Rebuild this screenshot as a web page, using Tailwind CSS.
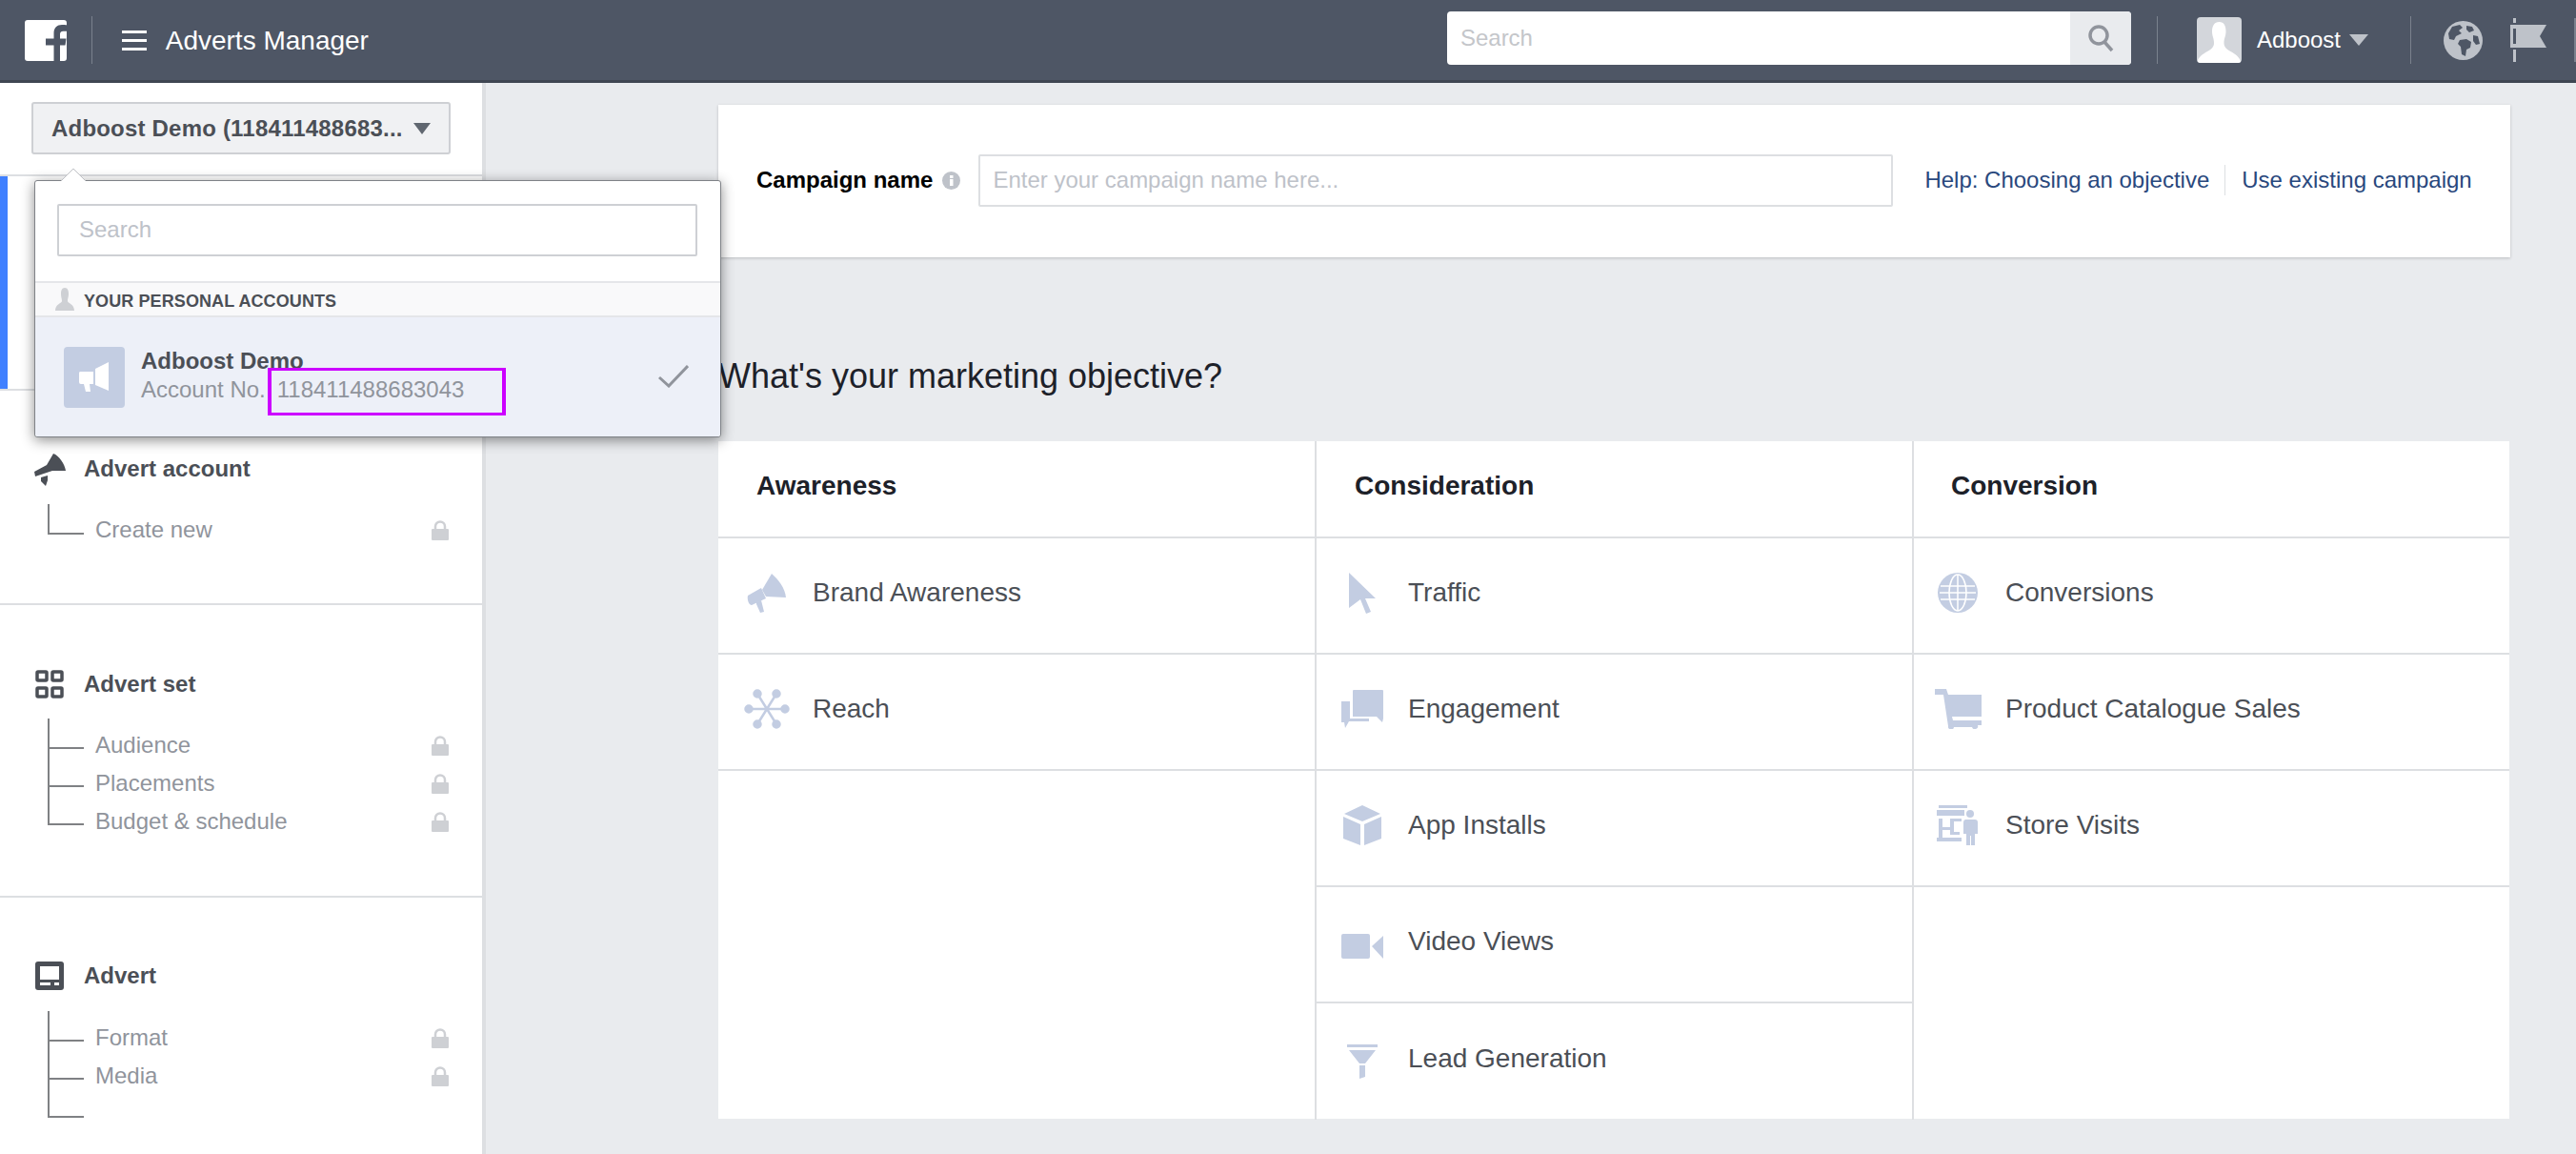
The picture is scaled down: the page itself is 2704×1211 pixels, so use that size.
<!DOCTYPE html>
<html lang="en">
<head>
    <meta charset="UTF-8">
    <title>Adverts Manager</title>
    <script src="https://cdn.jsdelivr.net/npm/@tailwindcss/browser@4"></script>
</head>
<body class="font-[family-name:Liberation_Sans,Arial,sans-serif] bg-[#e9ebee]">
<div class="relative w-[2704px] h-[1211px] overflow-hidden flex flex-col">

    <!-- top bar -->
    <header class="relative z-10 h-[87px] shrink-0 flex items-center bg-[#4e5665] border-b-[3px] border-[#3f4652] text-white">
        <div class="ml-[26px] w-[44px] h-[43px] shrink-0">
            <svg viewBox="0 0 44 43" class="w-[44px] h-[43px]"><path fill="#fff" d="M3 0h38a3 3 0 0 1 3 3v37a3 3 0 0 1-3 3H37V26.500h5.500l1-7H37v-4.500c0-2 .8-3.300 3.400-3.300H44V5.300c-1-.1-2.800-.3-5-.3-5 0-8.500 3-8.500 8.700v5.800H22v7h8.500V43H3a3 3 0 0 1-3-3V3a3 3 0 0 1 3-3z"/></svg>
        </div>
        <div class="ml-[26px] w-px h-[50px] bg-[#7a818d]"></div>
        <div class="ml-[31px] w-[26px] flex flex-col gap-[6px]">
            <div class="h-[3px] bg-white"></div>
            <div class="h-[3px] bg-white"></div>
            <div class="h-[3px] bg-white"></div>
        </div>
        <div class="ml-[20px] mt-[2px] text-[28px] leading-[34px] whitespace-nowrap shrink-0">Adverts Manager</div>

        <div class="ml-[1132px] mb-[4px] w-[718px] h-[56px] shrink-0 flex bg-white rounded-[4px] overflow-hidden">
            <div class="flex-1 pl-[14px] text-[24px] leading-[56px] text-[#c4c6ca]">Search</div>
            <div class="w-[64px] bg-[#e9ebee] flex items-center justify-center">
                <svg viewBox="0 0 28 30" class="w-[28px] h-[30px]" fill="none" stroke="#90949c" stroke-width="3.500"><circle cx="12" cy="12" r="9"/><path d="M18 19l8 9"/></svg>
            </div>
        </div>
        <div class="ml-[27px] w-px h-[50px] shrink-0 bg-[#7a818d]"></div>
        <div class="ml-[41px] w-[47px] h-[48px] shrink-0 rounded-[4px] bg-[#d3d6db] overflow-hidden">
            <svg viewBox="0 0 47 48" class="w-[47px] h-[48px]"><path fill="#fff" d="M23.500 5c5 0 7 4 7 10 0 5-2 7-2 12 0 4 2 6 7 9 5 3 9 5 11 12H0c2-7 6-9 11-12 5-3 7-5 7-9 0-5-2-7-2-12 0-6 2.500-10 7.500-10z"/></svg>
        </div>
        <div class="ml-[16px] text-[24px] leading-[30px] whitespace-nowrap shrink-0">Adboost</div>
        <div class="ml-[9px] w-0 h-0 shrink-0 border-x-[10px] border-t-[12px] border-x-transparent border-t-[#bec2c9]"></div>
        <div class="ml-[44px] w-px h-[50px] shrink-0 bg-[#7a818d]"></div>
        <svg viewBox="0 0 41 41" class="ml-[34px] w-[41px] h-[41px] shrink-0"><circle cx="20.500" cy="20.500" r="20.500" fill="#bec2c9"/><path fill="#4e5665" d="M9 6l8-2 3 3-4 3 3 3-6 3-2 4-5-1-1-6zM24 5l6 1 2 4-5 2-3-3zM17 20l7-1 5 3-1 6-4 2-1 7-4-2-1-8-3-3zM31 15l5 1 2 8-4 1-3-4z"/></svg>
        <svg viewBox="0 0 38 46" class="ml-[29px] w-[38px] h-[46px] shrink-0"><path fill="#bec2c9" d="M3 0h3v5H3zM0 7h38l-7 12 7 12H0zM3 33h3v13H3z"/><path fill="#4e5665" d="M3 11h3v16H3z"/></svg>
        <div class="ml-[29px] w-[2px] h-[46px] shrink-0 bg-[#7a818d]"></div>
    </header>

    <div class="flex flex-1 min-h-0">
        <!-- left rail -->
        <aside class="w-[510px] shrink-0 bg-white border-r-4 border-[#dddfe2]">
            <div class="h-[96px] pt-[20px] pl-[33px]">
                <div class="w-[440px] h-[55px] flex items-center pl-[19px] bg-[#f0f1f3] border-2 border-[#ced0d4] rounded-[3px]">
                    <span class="text-[24px] font-bold text-[#4b4f56] w-[368px] tracking-[0.2px] whitespace-nowrap">Adboost Demo (118411488683...</span>
                    <span class="ml-[12px] w-0 h-0 border-x-[9px] border-t-[12px] border-x-transparent border-t-[#606770]"></span>
                </div>
            </div>
            <div class="h-[227px] border-y-2 border-[#dddfe2]">
                <div class="w-[8px] h-full bg-[#4080ff]"></div>
            </div>

            <section class="h-[225px] pt-[62px] border-b-2 border-[#dddfe2]">
                <div class="h-[40px] flex items-center pl-[35px]">
                    <div class="w-[53px]">
                        <svg viewBox="0 0 35 35" class="w-[35px] h-[35px]" fill="#4b4f56"><path d="M21 1c6 2 12 11 13 18H20L2 25l-1-5 13-7z"/><path d="M8 26l7-2 0 5-2 6-5-5z"/></svg>
                    </div>
                    <span class="text-[24px] font-bold text-[#4b4f56]">Advert account</span>
                </div>
                <div class="mt-[17px] ml-[50px] flex">
                    <div class="w-[38px]">
                        <div class="h-[32px] border-l-2 border-b-2 border-[#7f8184]"></div>
                    </div>
                    <div class="flex-1 pt-[7px] pl-[12px] pr-[35px]">
                        <div class="h-[40px] flex items-center justify-between text-[24px] text-[#90949c]">
                            <span>Create new</span>
                            <svg viewBox="0 0 18 21" class="w-[18px] h-[21px]"><path fill="none" stroke="#ced0d4" stroke-width="2.500" d="M4 10V6.500a5 5 0 0 1 10 0V10"/><rect y="9" width="18" height="12" fill="#ced0d4" rx="1"/></svg>
                        </div>
                    </div>
                </div>
            </section>

            <section class="h-[307px] pt-[63px] border-b-2 border-[#dddfe2]">
                <div class="h-[40px] flex items-center pl-[37px]">
                    <div class="w-[51px]">
                        <svg viewBox="0 0 30 30" class="w-[30px] h-[30px]" fill="none" stroke="#4b4f56" stroke-width="3.500"><rect x="2" y="2" width="10" height="9" rx="1"/><rect x="18" y="2" width="10" height="9" rx="1"/><rect x="2" y="19" width="10" height="9" rx="1"/><rect x="18" y="19" width="10" height="9" rx="1"/></svg>
                    </div>
                    <span class="text-[24px] font-bold text-[#4b4f56]">Advert set</span>
                </div>
                <div class="mt-[16px] ml-[50px] flex">
                    <div class="w-[38px]">
                        <div class="h-[32px] border-l-2 border-b-2 border-[#7f8184]"></div>
                        <div class="h-[40px] border-l-2 border-b-2 border-[#7f8184]"></div>
                        <div class="h-[40px] border-l-2 border-b-2 border-[#7f8184]"></div>
                    </div>
                    <div class="flex-1 pt-[8px] pl-[12px] pr-[35px] text-[24px] text-[#90949c]">
                        <div class="h-[40px] flex items-center justify-between">
                            <span>Audience</span>
                            <svg viewBox="0 0 18 21" class="w-[18px] h-[21px]"><path fill="none" stroke="#ced0d4" stroke-width="2.500" d="M4 10V6.500a5 5 0 0 1 10 0V10"/><rect y="9" width="18" height="12" fill="#ced0d4" rx="1"/></svg>
                        </div>
                        <div class="h-[40px] flex items-center justify-between">
                            <span>Placements</span>
                            <svg viewBox="0 0 18 21" class="w-[18px] h-[21px]"><path fill="none" stroke="#ced0d4" stroke-width="2.500" d="M4 10V6.500a5 5 0 0 1 10 0V10"/><rect y="9" width="18" height="12" fill="#ced0d4" rx="1"/></svg>
                        </div>
                        <div class="h-[40px] flex items-center justify-between">
                            <span>Budget &amp; schedule</span>
                            <svg viewBox="0 0 18 21" class="w-[18px] h-[21px]"><path fill="none" stroke="#ced0d4" stroke-width="2.500" d="M4 10V6.500a5 5 0 0 1 10 0V10"/><rect y="9" width="18" height="12" fill="#ced0d4" rx="1"/></svg>
                        </div>
                    </div>
                </div>
            </section>

            <section class="pt-[62px]">
                <div class="h-[40px] flex items-center pl-[37px]">
                    <div class="w-[51px]">
                        <svg viewBox="0 0 30 30" class="w-[30px] h-[30px]"><rect width="30" height="30" rx="3" fill="#4b4f56"/><rect x="5" y="5" width="20" height="14" fill="#fff"/><rect x="5" y="22" width="11" height="3" fill="#fff"/><rect x="20" y="22" width="5" height="3" fill="#fff"/></svg>
                    </div>
                    <span class="text-[24px] font-bold text-[#4b4f56]">Advert</span>
                </div>
                <div class="mt-[17px] ml-[50px] flex">
                    <div class="w-[38px]">
                        <div class="h-[32px] border-l-2 border-b-2 border-[#7f8184]"></div>
                        <div class="h-[40px] border-l-2 border-b-2 border-[#7f8184]"></div>
                        <div class="h-[40px] border-l-2 border-b-2 border-[#7f8184]"></div>
                    </div>
                    <div class="flex-1 pt-[8px] pl-[12px] pr-[35px] text-[24px] text-[#90949c]">
                        <div class="h-[40px] flex items-center justify-between">
                            <span>Format</span>
                            <svg viewBox="0 0 18 21" class="w-[18px] h-[21px]"><path fill="none" stroke="#ced0d4" stroke-width="2.500" d="M4 10V6.500a5 5 0 0 1 10 0V10"/><rect y="9" width="18" height="12" fill="#ced0d4" rx="1"/></svg>
                        </div>
                        <div class="h-[40px] flex items-center justify-between">
                            <span>Media</span>
                            <svg viewBox="0 0 18 21" class="w-[18px] h-[21px]"><path fill="none" stroke="#ced0d4" stroke-width="2.500" d="M4 10V6.500a5 5 0 0 1 10 0V10"/><rect y="9" width="18" height="12" fill="#ced0d4" rx="1"/></svg>
                        </div>
                    </div>
                </div>
            </section>
        </aside>

        <!-- main -->
        <main class="flex-1 pl-[244px] pt-[23px]">
            <div class="w-[1881px] h-[160px] pb-[2px] flex items-center bg-white shadow-[0_1px_3px_rgba(0,0,0,0.2)]">
                <span class="ml-[40px] text-[24px] font-bold text-black whitespace-nowrap">Campaign name</span>
                <svg viewBox="0 0 19 19" class="ml-[10px] w-[19px] h-[19px]"><circle cx="9.500" cy="9.500" r="9.500" fill="#bec2c9"/><rect x="8" y="8" width="3.500" height="7" fill="#fff"/><rect x="8" y="4" width="3.500" height="3" fill="#fff"/></svg>
                <div class="ml-[19px] w-[960px] h-[55px] pl-[13px] flex items-center border-2 border-[#dddfe2] rounded-[2px] text-[24px] text-[#bec2c9]">Enter your campaign name here...</div>
                <a class="ml-[33px] text-[24px] text-[#29487d] whitespace-nowrap">Help: Choosing an objective</a>
                <div class="ml-[16px] w-px h-[32px] bg-[#dddfe2]"></div>
                <a class="ml-[17px] text-[24px] text-[#29487d] whitespace-nowrap">Use existing campaign</a>
            </div>

            <h1 class="mt-[104px] h-[42px] text-[36px] leading-[42px] text-[#1d2129]">What's your marketing objective?</h1>

            <div class="mt-[47px] w-[1880px] h-[711px] grid grid-cols-[628px_627px_1fr] bg-white text-[28px] text-[#4b4f56]">
                <div class="border-r-2 border-[#dddfe2]">
                    <div class="h-[102px] pl-[40px] pb-[6px] flex items-center border-b-2 border-[#dddfe2] text-[28px] font-bold text-[#1d2129]">Awareness</div>
                    <div class="h-[122px] pl-[2px] pb-[6px] flex items-center border-b-2 border-[#dddfe2]">
                        <div class="w-[97px] flex justify-center">
                            <svg viewBox="0 0 42 41" class="w-[42px] h-[41px]" fill="#c3cde2"><path d="M26 0c7 6 14 15 15 25l-21-1-4-7z"/><path d="M1 23l14-8 5 11-15 7c-3 0-5-6-4-10z"/><path d="M10 30l5-2 3 12-4 1-4-9z"/></svg>
                        </div>
                        Brand Awareness
                    </div>
                    <div class="h-[122px] pl-[2px] pb-[6px] flex items-center border-b-2 border-[#dddfe2]">
                        <div class="w-[97px] flex justify-center">
                            <svg viewBox="0 0 48 42" class="w-[48px] h-[42px]" fill="#c3cde2" stroke="#c3cde2" stroke-width="2.500"><path d="M5 21h38M14 5l20 32M34 5L14 37"/><circle cx="5" cy="21" r="3.500"/><circle cx="43" cy="21" r="3.500"/><circle cx="14" cy="5" r="3.500"/><circle cx="34" cy="5" r="3.500"/><circle cx="14" cy="37" r="3.500"/><circle cx="34" cy="37" r="3.500"/></svg>
                        </div>
                        Reach
                    </div>
                </div>

                <div class="border-r-2 border-[#dddfe2]">
                    <div class="h-[102px] pl-[40px] pb-[6px] flex items-center border-b-2 border-[#dddfe2] text-[28px] font-bold text-[#1d2129]">Consideration</div>
                    <div class="h-[122px] pb-[6px] flex items-center border-b-2 border-[#dddfe2]">
                        <div class="w-[96px] flex justify-center">
                            <svg viewBox="0 0 28 43" class="w-[28px] h-[43px]" fill="#c3cde2"><path d="M0 0l28 27-11 0 6 14-5 2-6-15-12 9z"/></svg>
                        </div>
                        Traffic
                    </div>
                    <div class="h-[122px] pb-[6px] flex items-center border-b-2 border-[#dddfe2]">
                        <div class="w-[96px] flex justify-center">
                            <svg viewBox="0 0 44 40" class="w-[44px] h-[40px]" fill="#c3cde2"><path d="M12 1a1 1 0 0 1 1-1h30a1 1 0 0 1 1 1v29l-1 4-6-6H12z"/><path d="M0 12h9v18h20v3H8l-4 7-1-6H0z"/></svg>
                        </div>
                        Engagement
                    </div>
                    <div class="h-[122px] pb-[6px] flex items-center border-b-2 border-[#dddfe2]">
                        <div class="w-[96px] flex justify-center">
                            <svg viewBox="0 0 40 42" class="w-[40px] h-[42px]" fill="#c3cde2"><path d="M20 0l19 9-19 8L1 9z"/><path d="M0 12l18 8v22L0 35z"/><path d="M40 12l-18 8v22l18-7z"/></svg>
                        </div>
                        App Installs
                    </div>
                    <div class="h-[122px] pb-[6px] flex items-center border-b-2 border-[#dddfe2]">
                        <div class="w-[96px] flex justify-center">
                            <svg viewBox="0 0 44 26" class="w-[44px] h-[26px] mt-[10px]" fill="#c3cde2"><rect width="30" height="26" rx="2"/><path d="M32 13L44 2v24z"/></svg>
                        </div>
                        Video Views
                    </div>
                    <div class="h-[122px] pb-[6px] flex items-center">
                        <div class="w-[96px] flex justify-center">
                            <svg viewBox="0 0 32 36" class="w-[32px] h-[36px] mt-[6px]" fill="#c3cde2"><rect width="32" height="3"/><path d="M2 6h28L19 20h-6z"/><path d="M13 22h6v12l-6 2z"/></svg>
                        </div>
                        Lead Generation
                    </div>
                </div>

                <div>
                    <div class="h-[102px] pl-[39px] pb-[6px] flex items-center border-b-2 border-[#dddfe2] text-[28px] font-bold text-[#1d2129]">Conversion</div>
                    <div class="h-[122px] pb-[6px] flex items-center border-b-2 border-[#dddfe2]">
                        <div class="w-[92px] mr-[4px] flex justify-center">
                            <svg viewBox="0 0 42 42" class="w-[42px] h-[42px]"><circle cx="21" cy="21" r="21" fill="#c3cde2"/><g fill="none" stroke="#fff" stroke-width="1.500"><ellipse cx="21" cy="21" rx="9" ry="19"/><path d="M21 2v38M3 14h36M2 21h38M3 28h36"/></g></svg>
                        </div>
                        Conversions
                    </div>
                    <div class="h-[122px] pb-[6px] flex items-center border-b-2 border-[#dddfe2]">
                        <div class="w-[92px] mr-[4px] flex justify-center">
                            <svg viewBox="0 0 49 42" class="w-[49px] h-[42px]" fill="#c3cde2"><path d="M0 0h12l2 6h35v23H18l1 4h30v5h-4a3 3 0 0 1-6 2H20a3 3 0 0 1-6-1l-5-33H0z"/></svg>
                        </div>
                        Product Catalogue Sales
                    </div>
                    <div class="h-[122px] pb-[6px] flex items-center border-b-2 border-[#dddfe2]">
                        <div class="w-[92px] mr-[4px] flex justify-center">
                            <svg viewBox="0 0 44 42" class="w-[44px] h-[42px]" fill="#c3cde2"><rect x="2" width="30" height="3"/><rect y="5" width="29" height="6"/><rect y="34" width="26" height="4"/><path d="M2 14h4v20H2zM6 23h8v3H6zM14 14h12v3H18v11h6v3H14z"/><circle cx="35" cy="9" r="4"/><path d="M30 15h10a3 3 0 0 1 3 3v12h-3v12h-4V32h-1v10h-4V30h-3V18a3 3 0 0 1 2-3z" stroke="#fff" stroke-width="1" paint-order="stroke"/></svg>
                        </div>
                        Store Visits
                    </div>
                </div>
            </div>
        </main>
    </div>

    <!-- account switcher popover -->
    <div class="absolute z-20 left-[36px] top-[189px] w-[721px] h-[270px] bg-white rounded-[3px] border border-[#7f8287] shadow-[0_3px_14px_rgba(0,0,0,0.45)]">
        <svg viewBox="0 0 26 13" class="absolute left-[27px] top-[-13px] w-[26px] h-[13px]"><path fill="#fff" stroke="#bfc1c5" d="M0 13L13 0l13 13"/></svg>
        <div class="pt-[24px] px-[23px] h-[105px]">
            <div class="w-[672px] h-[55px] pl-[21px] pb-[2px] flex items-center border-2 border-[#ced0d4] rounded-[2px] text-[24px] text-[#bec2c9]">Search</div>
        </div>
        <div class="h-[38px] flex items-center pl-[21px] pt-[5px] bg-[#f9f9fa] border-y-2 border-[#e5e6e9]">
            <svg viewBox="0 0 20 24" class="w-[20px] h-[24px] -mt-[5px]" fill="#ced0d4"><path d="M10 0c3 0 4 3 4 6 0 4-1 5-1 8 0 2 7 3 7 10H0c0-7 7-8 7-10 0-3-1-4-1-8 0-3 1-6 4-6z"/></svg>
            <span class="ml-[10px] text-[18px] font-bold text-[#4b4f56] tracking-[0.1px]">YOUR PERSONAL ACCOUNTS</span>
        </div>
        <div class="relative h-[125px] flex items-center pl-[30px] bg-[#edf0f8] rounded-b-[3px]">
            <div class="w-[64px] h-[64px] rounded-[4px] bg-[#c3cde2] flex items-center justify-center">
                <svg viewBox="0 0 32 32" class="w-[32px] h-[32px]" fill="#fff"><path d="M31 0v30l-14-6V7z"/><path d="M1 10h14v13H11l1 8-5 0-2-8H2a2 2 0 0 1-2-2v-9a2 2 0 0 1 1-2z"/></svg>
            </div>
            <div class="ml-[17px] mb-[4px] flex flex-col">
                <span class="text-[24px] font-bold leading-[30px] text-[#4b4f56]">Adboost Demo</span>
                <span class="text-[24px] leading-[30px] text-[#90949c]">Account No.<span class="ml-[12px]">118411488683043</span></span>
            </div>
            <svg viewBox="0 0 32 24" class="absolute left-[654px] top-[50px] w-[32px] h-[24px]" fill="none" stroke="#90949c" stroke-width="3"><path d="M1 13l10 9L31 1"/></svg>
            <div class="absolute left-[244px] top-[53px] w-[250px] h-[50px] border-x-4 border-y-[3px] border-[#cc00ff]"></div>
        </div>
    </div>
</div>
</body>
</html>
